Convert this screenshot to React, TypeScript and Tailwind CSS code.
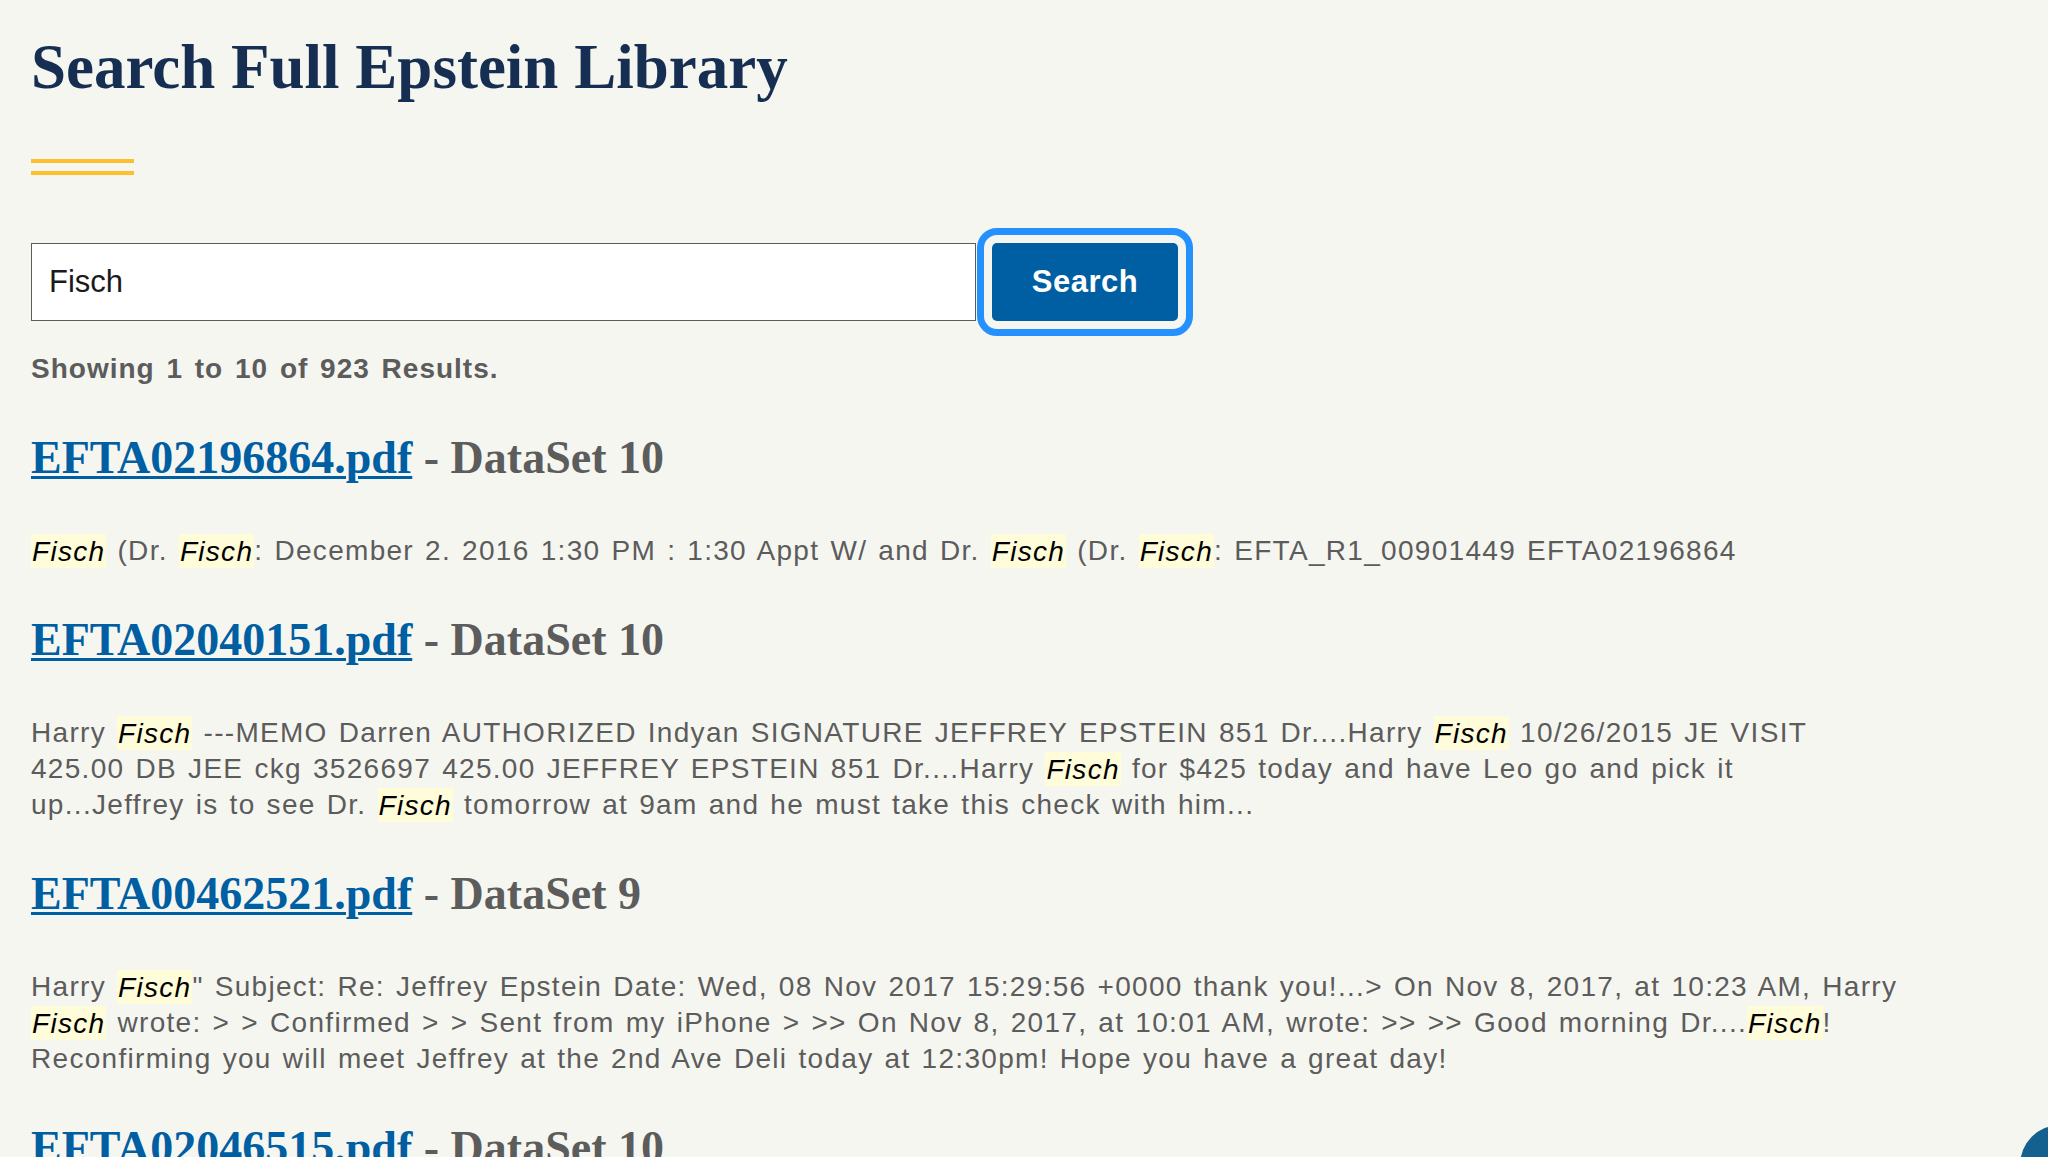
import React from "react";

const HL = ({ children }: { children: React.ReactNode }) => (
  <mark className="bg-[#fffcd9] px-[1px] py-[1.5px] text-black italic">{children}</mark>
);

const RESULTS: { file: string; set: string; lines: React.ReactNode[] }[] = [
  {
    file: "EFTA02196864.pdf",
    set: "DataSet 10",
    lines: [
      <>
        <HL>Fisch</HL> (Dr. <HL>Fisch</HL>: December 2. 2016 1:30 PM : 1:30 Appt W/ and Dr. <HL>Fisch</HL> (Dr.{" "}
        <HL>Fisch</HL>: EFTA_R1_00901449 EFTA02196864
      </>,
    ],
  },
  {
    file: "EFTA02040151.pdf",
    set: "DataSet 10",
    lines: [
      <>
        Harry <HL>Fisch</HL> ---MEMO Darren AUTHORIZED Indyan SIGNATURE JEFFREY EPSTEIN 851 Dr....Harry{" "}
        <HL>Fisch</HL> 10/26/2015 JE VISIT
      </>,
      <>
        425.00 DB JEE ckg 3526697 425.00 JEFFREY EPSTEIN 851 Dr....Harry <HL>Fisch</HL> for $425 today and have Leo go
        and pick it
      </>,
      <>
        up...Jeffrey is to see Dr. <HL>Fisch</HL> tomorrow at 9am and he must take this check with him...
      </>,
    ],
  },
  {
    file: "EFTA00462521.pdf",
    set: "DataSet 9",
    lines: [
      <>
        Harry <HL>Fisch</HL>" Subject: Re: Jeffrey Epstein Date: Wed, 08 Nov 2017 15:29:56 +0000 thank you!...&gt; On
        Nov 8, 2017, at 10:23 AM, Harry
      </>,
      <>
        <HL>Fisch</HL> wrote: &gt; &gt; Confirmed &gt; &gt; Sent from my iPhone &gt; &gt;&gt; On Nov 8, 2017, at 10:01
        AM, wrote: &gt;&gt; &gt;&gt; Good morning Dr....<HL>Fisch</HL>!
      </>,
      <>Reconfirming you will meet Jeffrey at the 2nd Ave Deli today at 12:30pm! Hope you have a great day!</>,
    ],
  },
  {
    file: "EFTA02046515.pdf",
    set: "DataSet 10",
    lines: [<>Harry <HL>Fisch</HL> appointment confirmation</>],
  },
];

export default function App() {
  return (
    <div className="relative h-screen overflow-hidden bg-[#f6f6f1] font-['Liberation_Sans',Arial,sans-serif]">
      <main className="px-[31px] pt-[36px]">
        <h1 className="font-['Liberation_Serif',serif] text-[63px] leading-[63px] font-bold text-[#162e51]">
          Search Full Epstein Library
        </h1>

        {/* double gold rule */}
        <div className="mt-[60px] flex flex-col gap-[8px]">
          <div className="h-[4px] w-[103px] bg-[#ffbe2e]" />
          <div className="h-[4px] w-[103px] bg-[#ffbe2e]" />
        </div>

        <form className="mt-[68px] flex items-center" onSubmit={(e) => e.preventDefault()}>
          <input
            defaultValue="Fisch"
            className="h-[78px] w-[945px] border border-[#5c5c5c] bg-white px-[17px] text-[31px] text-[#1b1b1b] outline-none"
          />
          <button
            type="submit"
            className="ml-[16px] h-[78px] w-[186px] rounded-[5px] bg-[#005ea2] text-[31px] font-bold tracking-[0.5px] text-white outline-solid outline-[7px] outline-[#2491ff] outline-offset-[8px]"
          >
            Search
          </button>
        </form>

        <p className="mt-[30px] text-[28px] leading-[36px] font-bold tracking-[1px] [word-spacing:3px] text-[#5c5c5c]">
          Showing 1 to 10 of 923 Results.
        </p>

        <div className="mt-[43px] flex flex-col gap-[43px]">
          {RESULTS.map((r) => (
            <div key={r.file}>
              <h2 className="font-['Liberation_Serif',serif] text-[46px] leading-[56px] font-bold text-[#5c5c5c]">
                <a
                  href="#"
                  className="text-[#005ea2] underline decoration-[3px] underline-offset-[3px]"
                >
                  {r.file}
                </a>{" "}
                - {r.set}
              </h2>
              <p className="mt-[47px] text-[28px] leading-[36px] tracking-[1.3px] [word-spacing:2px] text-[#5c5c5c]">
                {r.lines.map((l, i) => (
                  <span key={i} className="block whitespace-nowrap">
                    {l}
                  </span>
                ))}
              </p>
            </div>
          ))}
        </div>
      </main>

      {/* floating round button, mostly off-screen */}
      <div className="fixed right-[-52px] bottom-[-48px] h-[80px] w-[80px] rounded-full bg-[#14608f]" />
    </div>
  );
}
